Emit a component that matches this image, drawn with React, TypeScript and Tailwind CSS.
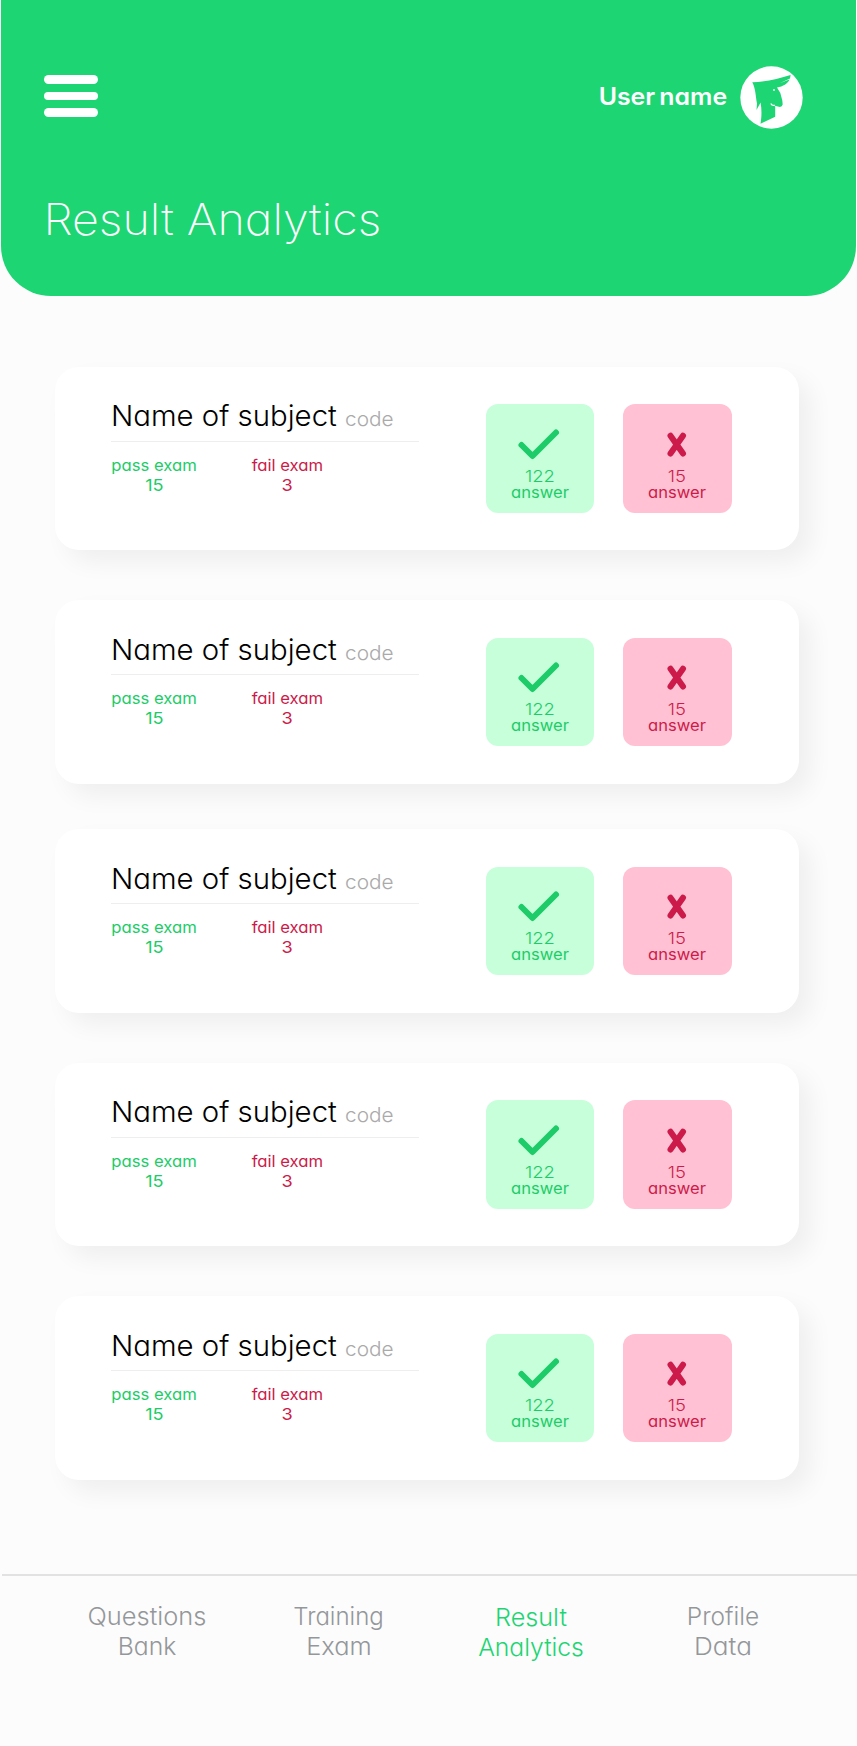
type NavItem = { lines: [string, string]; box: string; first: string; second: string };

const cards = ["mt-[70.500px]", "mt-[50px]", "mt-[45.500px]", "mt-[50px]", "mt-[50px]"];

const navItems: NavItem[] = [
  { lines: ["Questions", "Bank"], box: "w-[146px] text-[#94979a]", first: "scale-x-[1.06]", second: "scale-x-[1.03]" },
  { lines: ["Training", "Exam"], box: "w-[238px] text-[#94979a]", first: "scale-x-[1]", second: "scale-x-[1.06]" },
  { lines: ["Result", "Analytics"], box: "w-[146px] pt-px text-[#1dd573]", first: "scale-x-[1.05]", second: "scale-x-[1.03]" },
  { lines: ["Profile", "Data"], box: "w-[238px] text-[#94979a]", first: "scale-x-[1.02]", second: "scale-x-[1.09]" },
];

function Avatar() {
  return (
    <svg viewBox="0 0 63 63" className="h-[63px] w-[63px]">
      <circle cx="31.5" cy="31.5" r="31.2" fill="#fff" />
      <path
        fill="#1dd573"
        d="M12.3 16.2C25 16 38 12.800 50.600 9L50 12.500L39.500 17.200L49.500 13.500C48 17.500 43 20.500 37 21.500L40.300 27L42.300 34.500L42.700 38.500Q42 41.300 39 40.800L34 39.500L30.800 37.600L35.200 40.500V50.700L20.500 57.800C21.500 51.500 22 45 20.600 36.500L16.500 44.000L17 37.500C15.500 30 15.800 23 12.300 16.200Z"
      />
      <path d="M30.800 37.500q1.200 2.600 4 1.700" fill="none" stroke="#fff" strokeWidth="1.300" />
      <circle cx="34" cy="24" r="0.900" fill="#fff" />
    </svg>
  );
}

function Header() {
  return (
    <header className="mr-px ml-px h-[296px] rounded-b-[50px] bg-[#1dd573] text-white">
      <div className="flex h-[194px] items-start justify-between pt-[66px] pr-[53px] pl-[42.500px]">
        <button aria-label="Menu" className="mt-[9px] flex flex-col gap-[8px]">
          <span className="h-[8.500px] w-[54.500px] rounded-full bg-white" />
          <span className="h-[8.500px] w-[54.500px] rounded-full bg-white" />
          <span className="h-[8.500px] w-[54.500px] rounded-full bg-white" />
        </button>
        <div className="flex items-center gap-[13px]">
          <span className="origin-right scale-x-[1.035] pb-[1px] text-[24px] leading-[30px] font-semibold [word-spacing:-2px] whitespace-nowrap">User name</span>
          <Avatar />
        </div>
      </div>
      <h1 className="origin-left scale-x-[1.06] pl-[40px] text-[44px] leading-[50px] font-extralight whitespace-nowrap">Result Analytics</h1>
    </header>
  );
}

function Tally({ label, value, className }: { label: string; value: string; className: string }) {
  return (
    <div className={`flex flex-col items-center whitespace-nowrap ${className}`}>
      <span className="scale-x-[1.04] text-[16px] leading-[20px]">{label}</span>
      <span className="scale-x-110 text-[16.500px] leading-[20px]">{value}</span>
    </div>
  );
}

function AnswerTile({ correct, count }: { correct: boolean; count: string }) {
  return (
    <div
      className={`flex h-[108.500px] w-[108.500px] flex-col items-center rounded-[12px] pt-[21.500px] ${
        correct ? "bg-[#c6ffda] text-[#1dcc68]" : "bg-[#ffc1d3] text-[#cc1b4a]"
      }`}
    >
      <svg viewBox="0 0 50 40" className="h-[40px] w-[50px]" fill="none" stroke="currentColor" strokeLinecap="round" strokeLinejoin="round" strokeWidth="6">
        {correct ? <path d="M6.500 19L17.500 30L41 6.500" /> : <path d="M18.500 9.700L31 27.500M31 9.700L18.500 27.500" />}
      </svg>
      <span className="scale-x-[1.15] text-[16px] leading-[20px] font-[350]">{count}</span>
      <span className="mt-[-1px] scale-x-[1.07] text-[15.500px] leading-[16px]">answer</span>
    </div>
  );
}

function SubjectCard({ className }: { className: string }) {
  return (
    <article className={`ml-[55px] flex h-[183.500px] w-[743.500px] rounded-[24px] bg-white shadow-[12px_12px_24px_rgba(0,0,0,0.055)] ${className}`}>
      <div className="ml-[55.500px] w-[308px] pt-[30.500px]">
        <h2 className="flex h-[44.500px] items-baseline border-b border-[#eeeeee] whitespace-nowrap">
          <span className="origin-left scale-x-[1.03] text-[28.500px] leading-[38px] font-[280] text-black">Name of subject</span>
          <span className="ml-[15px] origin-left scale-x-[1.04] text-[20px] font-light text-[#aaaaaa]">code</span>
        </h2>
        <div className="flex pt-[13px]">
          <Tally label="pass exam" value="15" className="w-[87px] text-[#1dcc68]" />
          <Tally label="fail exam" value="3" className="ml-[52px] w-[76px] text-[#cc1b4a]" />
        </div>
      </div>
      <div className="ml-[67px] flex gap-[29px] pt-[37.500px]">
        <AnswerTile correct count="122" />
        <AnswerTile correct={false} count="15" />
      </div>
    </article>
  );
}

export default function App() {
  return (
    <div className="flex h-[1746px] w-[857px] flex-col overflow-hidden bg-[#fcfcfc] font-['Inter',sans-serif] [font-feature-settings:'cv11']">
      <Header />
      <main>
        {cards.map((gap, i) => (
          <SubjectCard key={i} className={gap} />
        ))}
      </main>
      <nav className="mt-[94px] ml-[2px] flex justify-start border-t-2 border-[#e2e2e2] pt-[26px] pl-[71.500px] text-center text-[24px] leading-[30px] font-[280] whitespace-nowrap">
        {navItems.map((item) => (
          <a key={item.lines[0]} className={`flex flex-col ${item.box}`}>
            <span className={item.first}>{item.lines[0]}</span>
            <span className={item.second}>{item.lines[1]}</span>
          </a>
        ))}
      </nav>
    </div>
  );
}
